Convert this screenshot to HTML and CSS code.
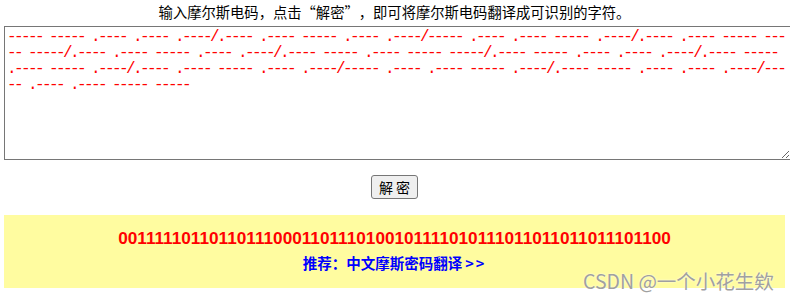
FILE: index.html
```html
<!DOCTYPE html>
<html lang="zh-CN">
<head>
    <meta charset="UTF-8">
    <meta name="viewport" content="width=device-width, initial-scale=1.0">
    <title>摩尔斯电码解密</title>
    <link rel="stylesheet" href="styles.css">
</head>
<body>
    <p class="tip">输入摩尔斯电码，点击<span class="quote-open">“</span>解密<span class="quote-close">”</span>，即可将摩尔斯电码翻译成可识别的字符。</p>

    <textarea id="morseInput" class="morse-input" spellcheck="false">----- ----- .---- .---- .----/.---- .---- ----- .---- .----/----- .---- .---- ----- .----/.---- .---- ----- ----- -----/.---- .---- ----- .---- .----/.---- ----- .---- ----- -----/.---- ----- .---- .---- .----/.---- ----- .---- ----- .----/.---- .---- ----- .---- .----/----- .---- .---- ----- .----/.---- ----- .---- .---- .----/----- .---- .---- ----- -----</textarea>

    <div class="actions">
        <button class="decode-button" type="button">解 密</button>
    </div>

    <div class="result">
        <div id="output" class="output">001111101101101110001101110100101111010111011011011011101100</div>
        <a class="recommend" href="#">推荐：中文摩斯密码翻译<span class="arrows">&gt;&gt;</span></a>
    </div>

    <div class="watermark">CSDN @一个小花生欸</div>
</body>
</html>
```

FILE: styles.css
```css
body {
    margin: 0;
    padding: 2px 5px 0 4px;
    font-family: "Noto Sans CJK SC", sans-serif;
    background: #fff;
    overflow-x: hidden;
}
.tip {
    margin: 0 0 4px;
    font-size: 14.3px;
    line-height: 20px;
    text-align: center;
    color: #000;
}
.quote-open,
.quote-close {
    display: inline-block;
    width: 1em;
}
.quote-open {
    text-align: right;
}
.quote-close {
    text-align: left;
}
.morse-input {
    display: block;
    box-sizing: border-box;
    width: calc(100% + 6px);
    height: 134px;
    margin: 0;
    padding: 2px;
    border: 1px solid #767676;
    font-family: "Liberation Mono", monospace;
    font-size: 16px;
    letter-spacing: -2.6px;
    line-height: 16px;
    color: #f00;
    word-break: break-all;
    outline: none;
}
.actions {
    display: flex;
    justify-content: center;
    padding: 15px 0 16px;
}
.decode-button {
    height: 24px;
    padding: 0 7px;
    font-family: "Noto Sans CJK SC", sans-serif;
    font-size: 14px;
    line-height: 20px;
    color: #000;
    background-color: #efefef;
    border: 1px solid #767676;
    border-radius: 3px;
}
.result {
    background-color: #fffca0;
    padding: 13px 0 14px;
    text-align: center;
}
.output {
    font-family: "Liberation Sans", "Noto Sans CJK SC", sans-serif;
    font-size: 17.2px;
    font-weight: bold;
    line-height: 20px;
    color: #f00;
}
.recommend {
    display: inline-block;
    margin-top: 5px;
    font-size: 14.5px;
    font-weight: bold;
    line-height: 20px;
    color: #00f;
    text-decoration: none;
}
.arrows {
    margin-left: 3px;
    letter-spacing: 2px;
}

/* watermark over the bottom right corner */
.watermark {
    position: absolute;
    left: 583px;
    top: 270px;
    font-size: 19.5px;
    line-height: 22px;
    color: #a0a0a0;
    text-shadow: 0 0 2px #fff;
}
```
